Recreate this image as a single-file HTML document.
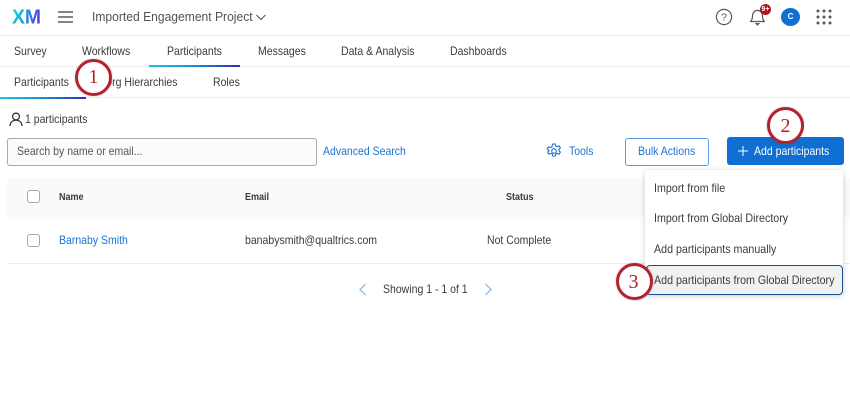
<!DOCTYPE html>
<html><head><meta charset="utf-8">
<style>
html,body{margin:0;padding:0;background:#fff}
#p{position:relative;width:850px;height:419px;overflow:hidden;background:#fff;font-family:"Liberation Sans",sans-serif;font-size:12px;color:#3b3b3f}
#p div,#p svg,#p span.t{position:absolute}
.t{white-space:nowrap;line-height:16px;transform:scaleX(.875);transform-origin:0 50%}
.d{transform:scaleX(.89)}
.h{font-size:10px;font-weight:700;transform:scaleX(.9)}
.b{color:#1a74d6}
.cb{width:11px;height:11px;border:1.5px solid #a8a8ac;border-radius:3px;background:#fff}
.c{width:31px;height:31px;border:3px solid #b5212f;border-radius:50%;background:#fff;box-shadow:0 0 2px rgba(0,0,0,.25)}
.n{font-family:"Liberation Serif",serif;font-size:20px;color:#b5212f;width:37px;text-align:center;line-height:22px;transform:none}
</style></head><body><div id="p">

<svg style="left:12px;top:7px" width="30" height="20"><defs><linearGradient id="g" x1="0" y1="0" x2="1" y2="0.3"><stop offset="0" stop-color="#21dbaa"/><stop offset=".4" stop-color="#07b4e8"/><stop offset="1" stop-color="#5a3fd6"/></linearGradient></defs><text x="0" y="16.5" font-family="Liberation Sans" font-weight="700" font-size="20" fill="url(#g)" textLength="29" lengthAdjust="spacingAndGlyphs">XM</text></svg>
<svg style="left:58px;top:11px" width="16" height="12"><path d="M0 1H15M0 6H15M0 11H15" stroke="#5c5c60" stroke-width="1.5"/></svg>
<span class="t" style="left:92px;top:9px;font-size:13px;color:#525256;transform:scaleX(.93)">Imported Engagement Project</span>
<svg style="left:256px;top:14px" width="10" height="7"><path d="M.5 1L5 5.5 9.5 1" fill="none" stroke="#525256" stroke-width="1.1"/></svg>

<svg style="left:715px;top:8px" width="18" height="18"><circle cx="9" cy="9" r="7.6" fill="none" stroke="#56565a" stroke-width="1.2"/><text x="9" y="12.6" text-anchor="middle" font-family="Liberation Sans" font-size="10.5" fill="#56565a">?</text></svg>
<svg style="left:749px;top:7px" width="17" height="19"><path d="M1.5 14.5c1.6-1.4 2-2.6 2-5.5 0-3.2 2.2-5.6 5-5.6s5 2.4 5 5.6c0 2.900.4 4.100 2 5.500z" fill="none" stroke="#56565a" stroke-width="1.2" stroke-linejoin="round"/><path d="M7 16.500h3L8.500 18z" fill="#56565a" stroke="#56565a"/></svg>
<div style="left:760px;top:4px;width:11px;height:11px;border-radius:50%;background:#b5121b;color:#fff;font-size:7px;font-weight:700;line-height:11px;text-align:center">9+</div>
<div style="left:781px;top:8px;width:19px;height:18px;border-radius:50%;background:#0f6fd2;color:#fff;font-size:8px;font-weight:700;line-height:18px;text-align:center">C</div>
<svg style="left:816px;top:9px" width="16" height="16" fill="#58585c"><circle cx="2" cy="2" r="1.5"/><circle cx="8" cy="2" r="1.5"/><circle cx="14" cy="2" r="1.5"/><circle cx="2" cy="8" r="1.5"/><circle cx="8" cy="8" r="1.5"/><circle cx="14" cy="8" r="1.5"/><circle cx="2" cy="14" r="1.500"/><circle cx="8" cy="14" r="1.500"/><circle cx="14" cy="14" r="1.500"/></svg>

<div style="left:0;top:35px;width:850px;height:1px;background:#ececee"></div>
<span class="t" style="left:14px;top:43px">Survey</span>
<span class="t" style="left:82px;top:43px">Workflows</span>
<span class="t" style="left:167px;top:43px">Participants</span>
<span class="t" style="left:258px;top:43px">Messages</span>
<span class="t" style="left:341px;top:43px">Data &amp; Analysis</span>
<span class="t" style="left:450px;top:43px">Dashboards</span>
<div style="left:0;top:66px;width:850px;height:1px;background:#ececee"></div>
<div style="left:149px;top:65px;width:91px;height:2px;background:linear-gradient(90deg,#1cc6dc,#1c8fd6 50%,#2b2fb8)"></div>

<span class="t" style="left:14px;top:74px">Participants</span>
<span class="t" style="left:104px;top:74px">Org Hierarchies</span>
<span class="t" style="left:213px;top:74px">Roles</span>
<div style="left:0;top:97px;width:850px;height:1px;background:#ececee"></div>
<div style="left:0;top:96.500px;width:86px;height:2px;background:linear-gradient(90deg,#1cc6dc,#1c8fd6 50%,#2b2fb8)"></div>

<svg style="left:9px;top:112px" width="14" height="15"><circle cx="7" cy="4.500" r="3.400" fill="none" stroke="#26262a" stroke-width="1.200"/><path d="M1 14c0-3.500 2.500-5.800 6-5.800s6 2.300 6 5.800" fill="none" stroke="#26262a" stroke-width="1.200"/></svg>
<span class="t" style="left:25px;top:111px">1 participants</span>

<div style="left:7px;top:138px;width:308px;height:26px;border:1px solid #a9a9ad;border-radius:3px;background:#fbfbfb"></div>
<span class="t" style="left:17px;top:143px;color:#56565a">Search by name or email...</span>
<span class="t b" style="left:323px;top:143px">Advanced Search</span>

<svg style="left:546px;top:143px" width="16" height="16" viewBox="0 0 16 16"><path d="M6.700 1h2.600l.4 2 1.500.7 1.800-1 1.400 2.200-1.500 1.400v1.400l1.500 1.400-1.400 2.200-1.800-1-1.500.7-.4 2H6.700l-.4-2-1.500-.7-1.800 1-1.400-2.200 1.500-1.400V7.300L1.100 5.900l1.400-2.200 1.800 1 1.500-.7z" fill="none" stroke="#1a74d6" stroke-width="1.100" stroke-linejoin="round"/><circle cx="8" cy="8" r="2.300" fill="none" stroke="#1a74d6" stroke-width="1.100"/></svg>
<span class="t b" style="left:569px;top:143px">Tools</span>

<div style="left:625px;top:138px;width:82px;height:26px;border:1px solid #5c9fe6;border-radius:3px;background:#fff"></div>
<span class="t b" style="left:638px;top:143px">Bulk Actions</span>
<div style="left:727px;top:137px;width:117px;height:28px;border-radius:3px;background:#0f6fd2"></div>
<svg style="left:738px;top:146px" width="10" height="10"><path d="M5 0V10M0 5H10" stroke="#fff" stroke-width="1"/></svg>
<span class="t" style="left:754px;top:143px;color:#fff">Add participants</span>

<div style="left:7px;top:178px;width:843px;height:39px;background:#fafafa"></div>
<div class="cb" style="left:27px;top:190px"></div>
<span class="t h" style="left:59px;top:190px">Name</span>
<span class="t h" style="left:245px;top:190px">Email</span>
<span class="t h" style="left:506px;top:190px">Status</span>
<div class="cb" style="left:27px;top:234px"></div>
<span class="t b" style="left:59px;top:232px">Barnaby Smith</span>
<span class="t" style="left:245px;top:232px">banabysmith@qualtrics.com</span>
<span class="t" style="left:487px;top:232px">Not Complete</span>
<div style="left:7px;top:263px;width:843px;height:1px;background:#ececee"></div>

<svg style="left:358px;top:283px" width="9" height="13"><path d="M7.500 1L2 6.500 7.500 12" fill="none" stroke="#8fbdec" stroke-width="1.300"/></svg>
<span class="t" style="left:383px;top:281px">Showing 1 - 1 of 1</span>
<svg style="left:484px;top:283px" width="9" height="13"><path d="M1.500 1L7 6.500 1.500 12" fill="none" stroke="#8fbdec" stroke-width="1.300"/></svg>

<div style="left:645px;top:170px;width:198px;height:125px;background:#fff;border-radius:4px;box-shadow:0 1px 6px rgba(0,0,0,.2)"></div>
<span class="t d" style="left:654px;top:180px">Import from file</span>
<span class="t d" style="left:654px;top:210px">Import from Global Directory</span>
<span class="t d" style="left:654px;top:241px">Add participants manually</span>
<div style="left:646px;top:265px;width:195px;height:28px;border:1.500px solid #14508f;border-radius:4px;background:#f0f1f1"></div>
<span class="t d" style="left:654px;top:272px">Add participants from Global Directory</span>

<div class="c" style="left:75px;top:59px;background:rgba(255,255,255,.95)"></div>
<span class="t n" style="left:75px;top:66px">1</span>
<div class="c" style="left:767px;top:107px"></div>
<span class="t n" style="left:767px;top:115px">2</span>
<div class="c" style="left:616px;top:263px"></div>
<span class="t n" style="left:615px;top:271px">3</span>
</div></body></html>
